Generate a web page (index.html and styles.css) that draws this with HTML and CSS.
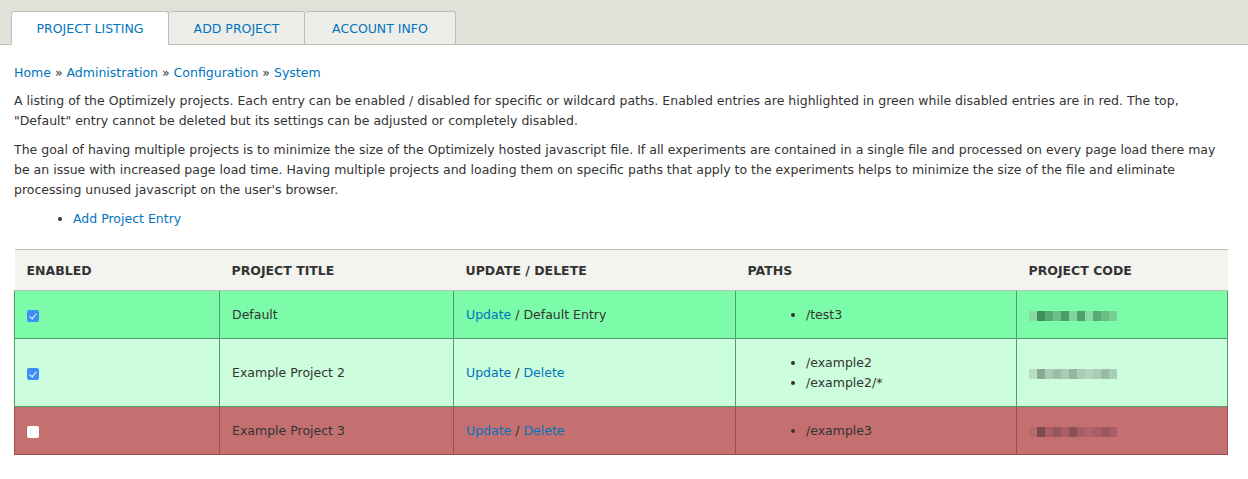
FILE: index.html
```html
<!DOCTYPE html>
<html>
<head>
<meta charset="utf-8">
<link rel="stylesheet" href="styles.css">
</head>
<body>
<div class="tabbar">
  <ul class="tabs">
    <li class="tab active"><a href="#">PROJECT LISTING</a></li>
    <li class="tab"><a href="#">ADD PROJECT</a></li>
    <li class="tab"><a href="#">ACCOUNT INFO</a></li>
  </ul>
</div>
<div class="content">
  <div class="breadcrumb"><a href="#">Home</a> » <a href="#">Administration</a> » <a href="#">Configuration</a> » <a href="#">System</a></div>
  <p>A listing of the Optimizely projects. Each entry can be enabled / disabled for specific or wildcard paths. Enabled entries are highlighted in green while disabled entries are in red. The top, "Default" entry cannot be deleted but its settings can be adjusted or completely disabled.</p>
  <p>The goal of having multiple projects is to minimize the size of the Optimizely hosted javascript file. If all experiments are contained in a single file and processed on every page load there may be an issue with increased page load time. Having multiple projects and loading them on specific paths that apply to the experiments helps to minimize the size of the file and eliminate processing unused javascript on the user's browser.</p>
  <ul class="actions"><li><a href="#">Add Project Entry</a></li></ul>
  <table class="projects">
    <thead>
      <tr><th class="c1">ENABLED</th><th class="c2">PROJECT TITLE</th><th class="c3">UPDATE / DELETE</th><th class="c4">PATHS</th><th class="c5">PROJECT CODE</th></tr>
    </thead>
    <tbody>
      <tr class="on">
        <td><span class="cb checked"></span></td>
        <td>Default</td>
        <td><a href="#">Update</a> / Default Entry</td>
        <td><ul class="paths"><li>/test3</li></ul></td>
        <td><span class="blur b1"><i></i><i></i><i></i><i></i><i></i><i></i><i></i><i></i><i></i><i></i><i></i></span></td>
      </tr>
      <tr class="on2">
        <td><span class="cb checked"></span></td>
        <td>Example Project 2</td>
        <td><a href="#">Update</a> / <a href="#">Delete</a></td>
        <td><ul class="paths"><li>/example2</li><li>/example2/*</li></ul></td>
        <td><span class="blur b2"><i></i><i></i><i></i><i></i><i></i><i></i><i></i><i></i><i></i><i></i><i></i></span></td>
      </tr>
      <tr class="off">
        <td><span class="cb"></span></td>
        <td>Example Project 3</td>
        <td><a href="#">Update</a> / <a href="#">Delete</a></td>
        <td><ul class="paths"><li>/example3</li></ul></td>
        <td><span class="blur b3"><i></i><i></i><i></i><i></i><i></i><i></i><i></i><i></i><i></i><i></i><i></i></span></td>
      </tr>
    </tbody>
  </table>
</div>
</body>
</html>
```

FILE: styles.css
```css
* { box-sizing: border-box; }
body {
  margin: 0;
  font-family: "DejaVu Sans", sans-serif;
  font-size: 12.5px;
  color: #333;
  background: #fff;
}
a { color: #0074bd; text-decoration: none; }

.tabbar {
  background: #e1e1da;
  height: 45px;
  border-bottom: 1px solid #bebeb9;
  padding: 11px 0 0 11px;
}
.tabs {
  list-style: none;
  margin: 0;
  padding: 0;
  display: flex;
  height: 34px;
}
.tab {
  background: #ededea;
  border: 1px solid #bebeb9;
  border-left: none;
  border-radius: 3px 3px 0 0;
  height: 34px;
  display: flex;
  align-items: center;
  justify-content: center;
  padding-top: 1px;
}
.tab:first-child { border-left: 1px solid #bebeb9; }
.tab.active { background: #fff; border-bottom-color: #fff; }
.tab:nth-child(1) { width: 158px; }
.tab:nth-child(2) { width: 136px; }
.tab:nth-child(3) { width: 151px; }
.tab a { font-size: 12.5px; color: #0074bd; }

.content { padding: 18px 20px 0 14px; }
.breadcrumb { line-height: 20px; margin-bottom: 8px; }
p { margin: 0 0 9px; line-height: 20px; }
.actions { margin: 0 0 20px; padding-left: 59px; line-height: 20px; }
.actions li { list-style: disc; }

.projects {
  width: 1214px;
  border-collapse: collapse;
}
.projects th {
  background: #f3f3ef;
  text-align: left;
  font-weight: bold;
  height: 41px;
  padding: 0 12px;
  border-top: 1px solid #bebeb9;
  border-bottom: 1px solid #bebeb9;
  color: #333;
}
.c1 { width: 205px; }
.c2 { width: 234px; }
.c3 { width: 282px; }
.c4 { width: 281px; }
.projects td {
  padding: 0 12px;
  border: 1px solid #4f9e69;
  height: 48px;
  vertical-align: middle;
}
.projects tr.on td { background: #7cfca8; }
.projects tr.on2 td { background: #ccfddc; height: 68px; }
.projects tr.off td { background: #c47070; border-color: #9e5050; }

.cb {
  display: inline-block;
  width: 12px;
  height: 12px;
  border-radius: 2px;
  background: #fff;
  vertical-align: middle;
  position: relative;
}
.cb.checked { background: #3d8ef5; }
.cb.checked::after {
  content: "";
  position: absolute;
  left: 4px;
  top: 2px;
  width: 3px;
  height: 6px;
  border: solid #fff;
  border-width: 0 1.5px 1.5px 0;
  transform: rotate(40deg);
}
.paths { margin: 0; padding-left: 58px; line-height: 20px; }
.paths li { list-style: disc; }

.blur { display: inline-flex; height: 10px; width: 88px; vertical-align: middle; }
.blur i { flex: 1; height: 10px; }
.b1 i { background: #5fbc7e; }
.b1 i:nth-child(1) { background: #8ad8a3; }
.b1 i:nth-child(2) { background: #3f8f5a; }
.b1 i:nth-child(3) { background: #5aa975; }
.b1 i:nth-child(4) { background: #6cc286; }
.b1 i:nth-child(5) { background: #4b9d67; }
.b1 i:nth-child(6) { background: #7ed69a; }
.b1 i:nth-child(7) { background: #4f9f6a; }
.b1 i:nth-child(8) { background: #86dca1; }
.b1 i:nth-child(9) { background: #5aa975; }
.b1 i:nth-child(10) { background: #6bbd84; }
.b1 i:nth-child(11) { background: #78ce94; }
.b2 i { background: #a8ccb4; }
.b2 i:nth-child(1) { background: #b8dcc4; }
.b2 i:nth-child(2) { background: #8aa995; }
.b2 i:nth-child(4) { background: #9cbca7; }
.b2 i:nth-child(6) { background: #94b49f; }
.b2 i:nth-child(8) { background: #b4d4bf; }
.b2 i:nth-child(10) { background: #9abba5; }
.b3 i { background: #a85e64; }
.b3 i:nth-child(1) { background: #b66a6e; }
.b3 i:nth-child(2) { background: #7d4a52; }
.b3 i:nth-child(4) { background: #955660; }
.b3 i:nth-child(6) { background: #8a5058; }
.b3 i:nth-child(8) { background: #b06468; }
.b3 i:nth-child(10) { background: #9a5860; }
```
